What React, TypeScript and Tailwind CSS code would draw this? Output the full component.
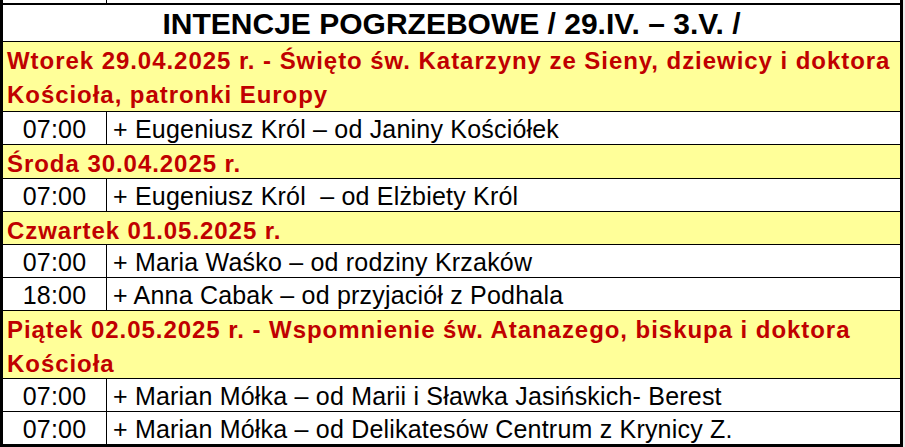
import React from 'react';

type Row =
  | { kind: 'day'; text: string; h: string }
  | { kind: 'mass'; time: string; text: string; h: string };

const rows: Row[] = [
  { kind: 'day', text: 'Wtorek 29.04.2025 r. - Święto św. Katarzyny ze Sieny, dziewicy i doktora Kościoła, patronki Europy', h: 'h-[70px]' },
  { kind: 'mass', time: '07:00', text: '+ Eugeniusz Król – od Janiny Kościółek', h: 'h-[33px]' },
  { kind: 'day', text: 'Środa 30.04.2025 r.', h: 'h-[34px]' },
  { kind: 'mass', time: '07:00', text: '+ Eugeniusz Król  – od Elżbiety Król', h: 'h-[33px]' },
  { kind: 'day', text: 'Czwartek 01.05.2025 r.', h: 'h-[34px]' },
  { kind: 'mass', time: '07:00', text: '+ Maria Waśko – od rodziny Krzaków', h: 'h-[33px]' },
  { kind: 'mass', time: '18:00', text: '+ Anna Cabak – od przyjaciół z Podhala', h: 'h-[33px]' },
  { kind: 'day', text: 'Piątek 02.05.2025 r. - Wspomnienie św. Atanazego, biskupa i doktora Kościoła', h: 'h-[68px]' },
  { kind: 'mass', time: '07:00', text: '+ Marian Mółka – od Marii i Sławka Jasińskich- Berest', h: 'h-[33px]' },
];

const App: React.FC = () => {
  return (
    <div
      className="w-[905px] h-[447px] flex bg-white overflow-hidden"
      style={{ fontFamily: '"Liberation Sans", Arial, sans-serif' }}
    >
      <div className="w-[903px] flex flex-col border-l-[3px] border-r-[3px] border-black text-black">
        {/* clipped row from above */}
        <div className="h-[5px] flex border-b-2 border-black">
          <div className="w-[104px] border-r border-black" />
        </div>

        {/* title */}
        <div className="h-[37px] border-b border-black text-center font-bold text-[30px] leading-[36px] pt-[1px] whitespace-nowrap overflow-hidden">
          INTENCJE POGRZEBOWE / 29.IV. – 3.V. /
        </div>

        {rows.map((r, i) =>
          r.kind === 'day' ? (
            <div
              key={i}
              className={`${r.h} border-b border-black bg-[#ffff99] text-[#c00000] font-bold text-[24px] tracking-[0.95px] leading-[34px] pl-[4px] pr-[6px] pt-[2px] overflow-hidden`}
            >
              {r.text}
            </div>
          ) : (
            <div key={i} className={`${r.h} flex border-b border-black text-[25px] tracking-[0.2px] leading-[32px] overflow-hidden`}>
              <div className="w-[104px] border-r border-black text-center pt-[1px]">{r.time}</div>
              <div className="flex-1 pl-[6px] pt-[1px] whitespace-pre">{r.text}</div>
            </div>
          )
        )}

        {/* last row with thick bottom edge */}
        <div className="h-[35px] flex border-b-[3px] border-black text-[25px] tracking-[0.2px] leading-[32px] overflow-hidden">
          <div className="w-[104px] border-r border-black text-center pt-[1px]">07:00</div>
          <div className="flex-1 pl-[6px] pt-[1px] whitespace-pre">+ Marian Mółka – od Delikatesów Centrum z Krynicy Z.</div>
        </div>
      </div>
      <div className="flex-1 bg-[#ececec]" />
    </div>
  );
};

export default App;
